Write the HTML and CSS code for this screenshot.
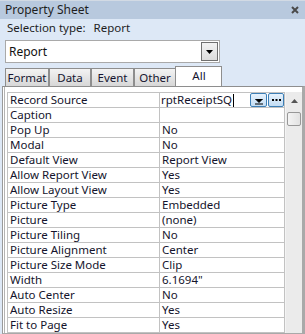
FILE: index.html
```html
<!DOCTYPE html>
<html lang="en">
<head>
<meta charset="UTF-8">
<title>Property Sheet</title>
<link rel="stylesheet" href="styles.css">
</head>
<body>

<div class="sheet">

    <!-- Title -->
    <div class="title-bar">
        <span class="title">Property Sheet</span>
        <svg class="close" width="8" height="8" viewBox="0 0 8 8">
            <path d="M1 1 L7 7 M7 1 L1 7" stroke="#4a4a4a" stroke-width="2"/>
        </svg>
    </div>

    <div class="selection">
        <span>Selection type:</span>
        <span class="selection-value">Report</span>
    </div>

    <div class="combo">
        <span class="combo-text">Report</span>
        <span class="combo-btn">
            <svg width="7" height="5" viewBox="0 0 7 5"><path d="M0 0 H7 L3.5 4 Z" fill="#000"/></svg>
        </span>
    </div>

    <!-- Tabs -->
    <div class="tabs">
        <div class="tab tab-format">Format</div>
        <div class="tab tab-data">Data</div>
        <div class="tab tab-event">Event</div>
        <div class="tab tab-other">Other</div>
        <div class="tab tab-all active">All</div>
    </div>

    <!-- Property grid -->
    <div class="panel">
        <div class="grid">
            <div class="row">
                <div class="label">Record Source</div>
                <div class="value value-edit">
                    <span>rptReceiptSQ</span><span class="caret"></span>
                    <span class="cell-btn drop-btn">
                        <svg width="8" height="6" viewBox="0 0 8 6"><path d="M0.5 0 H7.5 L4 3.5 Z M0 5 H8" fill="#000" stroke="#000" stroke-width="1"/></svg>
                    </span>
                    <span class="cell-btn build-btn">
                        <svg width="9" height="2" viewBox="0 0 9 2"><rect x="0" y="0" width="2" height="2" fill="#000"/><rect x="3.5" y="0" width="2" height="2" fill="#000"/><rect x="7" y="0" width="2" height="2" fill="#000"/></svg>
                    </span>
                </div>
            </div>
            <div class="row"><div class="label">Caption</div><div class="value"></div></div>
            <div class="row"><div class="label">Pop Up</div><div class="value">No</div></div>
            <div class="row"><div class="label">Modal</div><div class="value">No</div></div>
            <div class="row"><div class="label">Default View</div><div class="value">Report View</div></div>
            <div class="row"><div class="label">Allow Report View</div><div class="value">Yes</div></div>
            <div class="row"><div class="label">Allow Layout View</div><div class="value">Yes</div></div>
            <div class="row"><div class="label">Picture Type</div><div class="value">Embedded</div></div>
            <div class="row"><div class="label">Picture</div><div class="value">(none)</div></div>
            <div class="row"><div class="label">Picture Tiling</div><div class="value">No</div></div>
            <div class="row"><div class="label">Picture Alignment</div><div class="value">Center</div></div>
            <div class="row"><div class="label">Picture Size Mode</div><div class="value">Clip</div></div>
            <div class="row"><div class="label">Width</div><div class="value">6.1694"</div></div>
            <div class="row"><div class="label">Auto Center</div><div class="value">No</div></div>
            <div class="row"><div class="label">Auto Resize</div><div class="value">Yes</div></div>
            <div class="row"><div class="label">Fit to Page</div><div class="value">Yes</div></div>
        </div>

        <div class="scrollbar">
            <div class="scroll-up">
                <svg width="7" height="4" viewBox="0 0 7 4"><path d="M0 4 H7 L3.5 0 Z" fill="#555"/></svg>
            </div>
            <div class="scroll-thumb"></div>
        </div>
    </div>

</div>

</body>
</html>
```

FILE: styles.css
```css
* {
    box-sizing: border-box;
    margin: 0;
    padding: 0;
}

body {
    font-family: "Noto Sans", "Open Sans", sans-serif;
    font-size: 11.5px;
    color: #14142c;
    background-color: #dde8f6;
}

.sheet {
    width: 305px;
    height: 334px;
    background-color: #dde8f6;
    overflow: hidden;
}

/* Title */
.title-bar {
    height: 19px;
    border-top: 1px solid #d2dae4;
    background-color: #b8c9de;
    display: flex;
    justify-content: space-between;
    align-items: center;
    padding: 0 5px 0 5px;
}

.title {
    font-size: 12px;
    color: #1e1e1e;
    line-height: 18px;
}

.close {
    margin-right: 1px;
}

.selection {
    margin-top: 1px;
    height: 15px;
    line-height: 15px;
    padding-left: 7px;
    font-size: 11.5px;
    color: #1e1e1e;
}

.selection-value {
    margin-left: 5px;
}

/* Combo */
.combo {
    margin: 5px 0 0 5px;
    width: 215px;
    height: 23px;
    background-color: #fff;
    border: 1px solid #a9a9a9;
    display: flex;
    align-items: center;
    justify-content: space-between;
    padding: 0 1px 0 3px;
}

.combo-text {
    font-size: 12px;
    color: #111;
}

.combo-btn {
    width: 17px;
    height: 19px;
    border: 1px solid #707070;
    background: linear-gradient(#f2f2f2, #dcdcdc);
    display: flex;
    align-items: center;
    justify-content: center;
    padding-top: 1px;
}

/* Tabs */
.tabs {
    margin: 3px 0 0 5px;
    height: 20px;
    display: flex;
    align-items: flex-end;
}

.tab {
    height: 18px;
    border: 1px solid #8e8e8e;
    border-bottom: none;
    background: linear-gradient(#f3f3f3, #d7d7d7);
    text-align: center;
    line-height: 17px;
    font-size: 11.5px;
    color: #151530;
}

.tab-format { width: 44px; }
.tab-data { width: 42px; }
.tab-event { width: 43px; }
.tab-other { width: 42px; }

.tab-all {
    width: 47px;
    margin-left: -1px;
}

.tab.active {
    height: 20px;
    background: #fff;
    line-height: 18px;
    padding-left: 1px;
}

/* Panel */
.panel {
    margin-left: 2px;
    height: 248px;
    border-top: 1px solid #8e8e8e;
    border-left: 1px solid #9a9a9a;
    border-right: 3px solid #a9a9a9;
    border-bottom: 1px solid #a9a9a9;
    background-color: #fff;
    box-shadow: inset 1px 0 0 #fff, inset 2px 0 0 #b4b4b4;
    padding: 5px 0 0 4px;
    display: flex;
    align-items: flex-start;
}

.grid {
    width: 278px;
    border: 1px solid #c2c2c2;
    border-bottom: none;
}

.row {
    display: flex;
    height: 15px;
    border-bottom: 1px solid #c2c2c2;
    line-height: 14px;
}

.label {
    width: 152px;
    border-right: 1px solid #c2c2c2;
    padding-left: 2px;
    white-space: nowrap;
}

.value {
    flex: 1;
    padding-left: 2px;
    white-space: nowrap;
}

.value-edit {
    display: flex;
    align-items: center;
    padding-left: 1px;
}

.caret {
    width: 1px;
    height: 13px;
    background-color: #000;
    margin-left: 1px;
}

.cell-btn {
    height: 14px;
    border: 1px solid #3d7fb6;
    border-radius: 2px;
    background: linear-gradient(#e6f2fd, #c3ddf4);
    display: flex;
    justify-content: center;
}

.drop-btn {
    width: 17px;
    margin-left: auto;
    align-items: flex-end;
    padding-bottom: 1px;
}

.build-btn {
    width: 16px;
    margin-left: 1px;
    align-items: center;
}

/* Scrollbar */
.scrollbar {
    width: 17px;
    height: 241px;
    background-color: #ebebeb;
    border-left: 1px solid #f4f4f4;
    display: flex;
    flex-direction: column;
    align-items: center;
}

.scroll-up {
    height: 16px;
    display: flex;
    align-items: center;
    justify-content: center;
    padding-top: 1px;
}

.scroll-thumb {
    margin-top: 4px;
    width: 14px;
    height: 14px;
    border: 1px solid #989898;
    border-radius: 2px;
    background: linear-gradient(90deg, #f4f4f4, #e2e2e2);
}
```
